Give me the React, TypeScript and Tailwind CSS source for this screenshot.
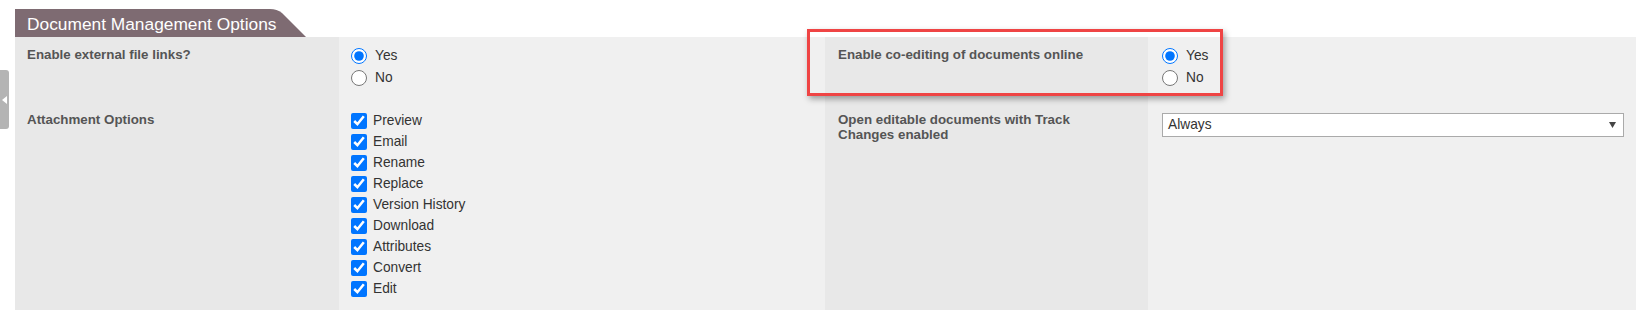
import React from 'react';

const font = { fontFamily: '"Liberation Sans", Arial, sans-serif' };

const attachmentOptions = [
  'Preview',
  'Email',
  'Rename',
  'Replace',
  'Version History',
  'Download',
  'Attributes',
  'Convert',
  'Edit',
];

const RadioGroup = ({ name }: { name: string }) => (
  <div className="flex flex-col gap-[6px]">
    <label className="flex items-center h-[16px] gap-[8px]">
      <input type="radio" name={name} defaultChecked className="m-0 w-[16px] h-[16px] accent-[#0075ff]" />
      <span>Yes</span>
    </label>
    <label className="flex items-center h-[16px] gap-[8px]">
      <input type="radio" name={name} className="m-0 w-[16px] h-[16px]" />
      <span>No</span>
    </label>
  </div>
);

const App = () => {
  return (
    <div className="relative w-full h-[320px] bg-white pl-[15px] pr-[13px] pt-[9px]" style={font}>
      {/* side collapse handle */}
      <div className="absolute left-0 top-[70px] w-[9px] h-[59px] bg-[#b4b4b4] rounded-r-[3px] flex items-center justify-center">
        <svg width="5" height="8" viewBox="0 0 5 8">
          <path d="M5 0 L0 4 L5 8 Z" fill="#fff" />
        </svg>
      </div>

      {/* section tab */}
      <div className="relative w-[292px] h-[28px]">
        <svg className="absolute inset-0" width="292" height="28" viewBox="0 0 292 28">
          <path d="M0 0 H255 Q262 0 267 4 L291 28 H0 Z" fill="#7e6b72" />
        </svg>
        <div className="relative pl-[12px] pt-[2px] leading-[26px] text-[17.33px] text-white whitespace-nowrap">
          Document Management Options
        </div>
      </div>

      <div className="grid grid-cols-[324px_486px_323px_488px] text-[13.75px] text-[#333]">
        {/* row 1 */}
        <div className="bg-[#e8e8e8] px-[12px] pt-[10px] text-[13.33px] leading-[16px] font-bold text-[#555]">
          Enable external file links?
        </div>
        <div className="bg-[#f0f0f0] px-[12px] pt-[11px] pb-[16px]">
          <RadioGroup name="extLinks" />
        </div>
        <div className="bg-[#e8e8e8] px-[13px] pt-[10px] text-[13.33px] leading-[16px] font-bold text-[#555]">
          Enable co-editing of documents online
        </div>
        <div className="bg-[#f0f0f0] px-[14px] pt-[11px] pb-[16px]">
          <RadioGroup name="coEdit" />
        </div>

        {/* row 2 */}
        <div className="bg-[#e8e8e8] px-[12px] pt-[10px] text-[13.33px] leading-[16px] font-bold text-[#555]">
          Attachment Options
        </div>
        <div className="bg-[#f0f0f0] px-[12px] pt-[11px] pb-[13px]">
          <div className="flex flex-col gap-[5px]">
            {attachmentOptions.map((opt) => (
              <label key={opt} className="flex items-center h-[16px] gap-[6px]">
                <input type="checkbox" defaultChecked className="m-0 w-[16px] h-[16px] accent-[#0075ff]" />
                <span>{opt}</span>
              </label>
            ))}
          </div>
        </div>
        <div className="bg-[#e8e8e8] px-[13px] pt-[10px] text-[13.33px] leading-[15px] font-bold text-[#555]">
          <div className="max-w-[262px]">Open editable documents with Track Changes enabled</div>
        </div>
        <div className="bg-[#f0f0f0] pl-[14px] pr-[12px] pt-[11px]">
          <div className="h-[24px] bg-white border border-[#aaa] flex items-center justify-between pl-[5px] pr-[7px]">
            <span>Always</span>
            <svg width="7" height="6" viewBox="0 0 7 6">
              <path d="M0 0 H7 L3.5 6 Z" fill="#444" />
            </svg>
          </div>
        </div>
      </div>

      {/* highlight annotation */}
      <div className="absolute left-[807px] top-[29px] w-[416px] h-[67px] border-[3px] border-[#ef4444] shadow-[2px_3px_6px_rgba(0,0,0,0.35)]" />
    </div>
  );
};

export default App;
